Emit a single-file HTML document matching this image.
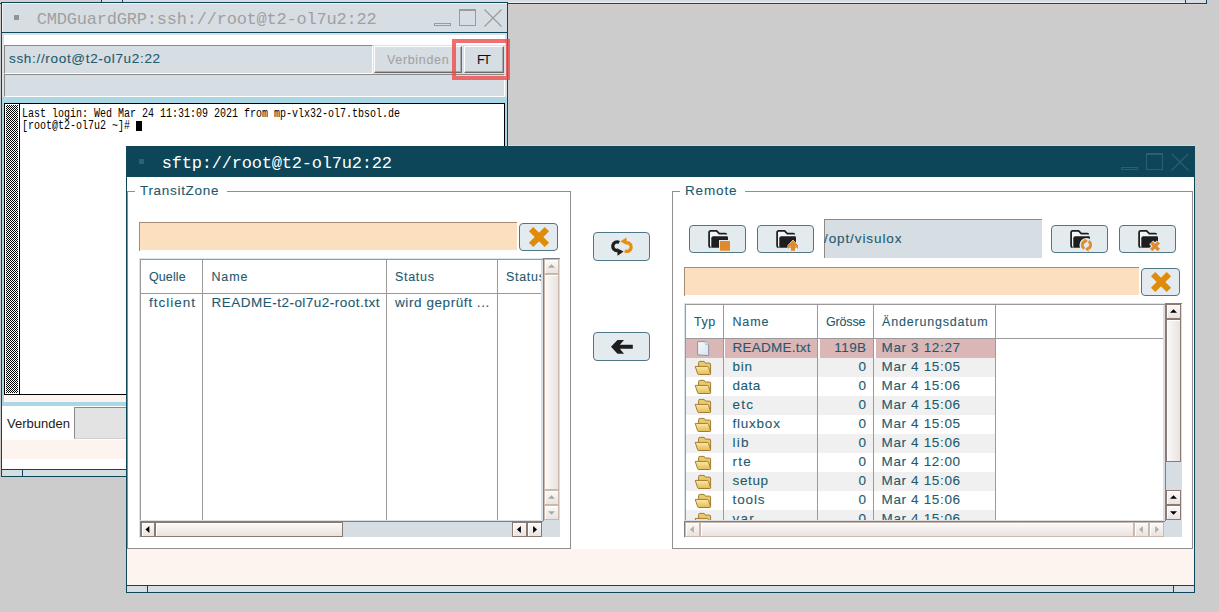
<!DOCTYPE html>
<html><head><meta charset="utf-8">
<style>
*{margin:0;padding:0;box-sizing:border-box}
html,body{width:1219px;height:612px;overflow:hidden;background:#cccccc;position:relative;font-family:"Liberation Sans",sans-serif}
.a{position:absolute}
.t{position:absolute;white-space:nowrap;line-height:1;-webkit-text-stroke:0.1px currentColor}
svg{position:absolute;overflow:visible}
</style></head><body>

<div class="a" style="left:0px;top:0px;width:1207px;height:4px;background:#d6dee4;border-bottom:1px solid #0c4658;border-right:1px solid #0c4658"></div>
<div class="a" style="left:0px;top:0px;width:101px;height:3px;background:#d4d0cf"></div>
<div class="a" style="left:101px;top:0px;width:1px;height:3px;background:#0c4658"></div>
<div class="a" style="left:122px;top:0px;width:1px;height:3px;background:#0c4658"></div>
<div class="a" style="left:1185px;top:0px;width:1px;height:3px;background:#0c4658"></div>
<div class="a" style="left:508px;top:2px;width:677px;height:1px;background:#eef2f4"></div>
<div class="a" style="left:508px;top:4px;width:698px;height:1px;background:#d9d2d0"></div>
<div class="a" style="left:1px;top:2px;width:507px;height:475px;background:#fff;border:1px solid #0c4658"></div>
<div class="a" style="left:2px;top:3px;width:505px;height:29px;background:#d6dee4;border-top:1px solid #eef2f4;border-left:1px solid #eef2f4"></div>
<div class="a" style="left:1px;top:32px;width:507px;height:1px;background:#0c4658"></div>
<div class="a" style="left:14px;top:15px;width:5px;height:5px;background:#939393"></div>
<div class="t" style="left:36.8px;top:10.97px;font-family:'Liberation Mono';font-size:17px;letter-spacing:-0.210px;color:#a0a0a0;-webkit-text-stroke:0;">CMDGuardGRP:ssh://root@t2-ol7u2:22</div>
<div class="a" style="left:434px;top:23px;width:17px;height:3px;border:1px solid #9a9a9a"></div>
<div class="a" style="left:459px;top:9px;width:17px;height:17px;border:1px solid #9a9a9a;border-top-width:2px"></div>
<svg style="left:484px;top:9px" width="18" height="18"><path d="M0.5 0.5L17.5 17.5M17.5 0.5L0.5 17.5" stroke="#9a9a9a" stroke-width="1.1"/></svg>
<div class="a" style="left:2px;top:33px;width:505px;height:64px;background:#d9e0e6"></div>
<div class="a" style="left:4px;top:35px;width:501px;height:10px;background:#fff"></div>
<div class="a" style="left:4px;top:45px;width:369px;height:29px;background:#d6dde3;border-top:1px solid #8a8a8a;border-left:1px solid #8a8a8a;border-right:1px solid #fff;border-bottom:1px solid #fff"></div>
<div class="t" style="left:9px;top:52.07px;font-family:'Liberation Sans';font-size:13.5px;letter-spacing:0.681px;color:#1e5a6e;">ssh://root@t2-ol7u2:22</div>
<div class="a" style="left:374px;top:46px;width:88px;height:27px;background:#d6dde3;border-top:1px solid #fff;border-left:1px solid #fff;border-right:1px solid #6a6a6a;border-bottom:1px solid #6a6a6a;box-shadow:inset -1px -1px 0 #a8acb0"></div>
<div class="t" style="left:387px;top:54.42px;font-family:'Liberation Sans';font-size:12.5px;letter-spacing:0.662px;color:#a3a3a3;">Verbinden</div>
<div class="a" style="left:464px;top:46px;width:40px;height:27px;background:#d6dde3;border-top:1px solid #fff;border-left:1px solid #fff;border-right:1px solid #6a6a6a;border-bottom:1px solid #6a6a6a;box-shadow:inset -1px -1px 0 #a8acb0"></div>
<div class="t" style="left:477px;top:54.42px;font-family:'Liberation Sans';font-size:12.5px;letter-spacing:-1.500px;color:#111111;">FT</div>
<div class="a" style="left:4px;top:74px;width:501px;height:23px;background:#d6dde3;border-top:1px solid #8a8a8a;border-left:1px solid #8a8a8a;border-right:1px solid #fff;border-bottom:1px solid #fff"></div>
<div class="a" style="left:2px;top:97px;width:505px;height:309px;background:#a9d7e6"></div>
<div class="a" style="left:4px;top:395px;width:501px;height:7px;background:#fdf3ef"></div>
<div class="a" style="left:4px;top:103px;width:501px;height:292px;background:#fff;border:1px solid #000"></div>
<div class="a" style="left:6px;top:105px;width:12px;height:288px;background:repeating-conic-gradient(#000 0 25%,#fff 0 50%) 0 0/2px 2px"></div>
<div class="a" style="left:19px;top:104px;width:1px;height:290px;background:#000"></div>
<div class="t " style="left:22px;top:107.7px;font-family:'Liberation Mono';font-size:10px;line-height:10px;color:#000;-webkit-text-stroke:0;transform:scaleY(1.35);transform-origin:0 0">Last login: Wed Mar 24 11:31:09 2021 from mp-vlx32-ol7.tbsol.de</div>
<div class="t " style="left:22px;top:119.8px;font-family:'Liberation Mono';font-size:10px;line-height:10px;color:#000;-webkit-text-stroke:0;transform:scaleY(1.35);transform-origin:0 0">[root@t2-ol7u2 ~]#</div>
<div class="a" style="left:136px;top:121px;width:6px;height:10px;background:#000"></div>
<div class="a" style="left:2px;top:406px;width:505px;height:63px;background:#fff"></div>
<div class="t" style="left:7px;top:417.00px;font-family:'Liberation Sans';font-size:13px;letter-spacing:0.000px;color:#1a1a1a;-webkit-text-stroke:0px currentColor;">Verbunden</div>
<div class="a" style="left:74px;top:407px;width:60px;height:32px;background:#e3e3e3;border-top:1px solid #8a8a8a;border-left:1px solid #8a8a8a;border-bottom:1px solid #cfcfcf"></div>
<div class="a" style="left:2px;top:440px;width:505px;height:19px;background:#fdf3ef"></div>
<div class="a" style="left:1px;top:469px;width:507px;height:1px;background:#0c4658"></div>
<div class="a" style="left:2px;top:470px;width:505px;height:6px;background:#d6dee4"></div>
<div class="a" style="left:22px;top:470px;width:1px;height:6px;background:#0c4658"></div>
<div class="a" style="left:508px;top:145px;width:687px;height:1px;background:#ddd6d4"></div>
<div class="a" style="left:126px;top:146px;width:1069px;height:447px;background:#fff;border:1px solid #0c4658"></div>
<div class="a" style="left:126px;top:146px;width:1069px;height:31px;background:#0c4658"></div>
<div class="a" style="left:139px;top:159px;width:5px;height:5px;background:#2b6179"></div>
<div class="t" style="left:161.8px;top:154.97px;font-family:'Liberation Mono';font-size:17px;letter-spacing:-0.200px;color:#ffffff;-webkit-text-stroke:0;">sftp://root@t2-ol7u2:22</div>
<div class="a" style="left:1121px;top:167px;width:17px;height:3px;border:1px solid #2d5e73"></div>
<div class="a" style="left:1146px;top:153px;width:17px;height:17px;border:1px solid #2d5e73;border-top-width:2px"></div>
<svg style="left:1171px;top:153px" width="18" height="18"><path d="M0.5 0.5L17.5 17.5M17.5 0.5L0.5 17.5" stroke="#2d5e73" stroke-width="1.1"/></svg>
<div class="a" style="left:127px;top:549px;width:1067px;height:36px;background:#fdf3ef"></div>
<div class="a" style="left:126px;top:585px;width:1069px;height:1px;background:#0c4658"></div>
<div class="a" style="left:127px;top:586px;width:1067px;height:6px;background:#d6dee4"></div>
<div class="a" style="left:147px;top:586px;width:1px;height:6px;background:#0c4658"></div>
<div class="a" style="left:1173px;top:586px;width:1px;height:6px;background:#0c4658"></div>
<div class="a" style="left:127px;top:191px;width:444px;height:358px;border:1px solid #8f8f8f"></div>
<div class="a" style="left:135px;top:188px;width:92px;height:8px;background:#fff"></div>
<div class="t" style="left:140px;top:183.57px;font-family:'Liberation Sans';font-size:13.5px;letter-spacing:0.690px;color:#1e5a6e;">TransitZone</div>
<div class="a" style="left:139px;top:222px;width:378px;height:28px;background:#fcdfbe;border-top:1px solid #a48c76"></div>
<div class="a" style="left:139px;top:222px;width:1px;height:29px;background:#a48c76"></div>
<div class="a" style="left:519px;top:223px;width:39px;height:28px;border:1px solid #4f7686;border-radius:4px;background:#e4ebef"></div>
<svg style="left:526.5px;top:225.0px" width="24" height="24"><path d="M4.1 4.1L19.9 19.9M19.9 4.1L4.1 19.9" stroke="#e08c0b" stroke-width="6.2"/></svg>
<div class="a" style="left:139px;top:258px;width:404px;height:1px;background:#d9e3e9"></div>
<div class="a" style="left:139px;top:258px;width:1px;height:280px;background:#d9e3e9"></div>
<div class="a" style="left:140px;top:259px;width:404px;height:263px;background:#fff;border-top:1px solid #9a9a9a;border-left:1px solid #9a9a9a"></div>
<div class="a" style="left:141px;top:293px;width:401px;height:1px;background:#9a9a9a"></div>
<div class="a" style="left:202px;top:260px;width:1px;height:261px;background:#9a9a9a"></div>
<div class="a" style="left:386px;top:260px;width:1px;height:261px;background:#9a9a9a"></div>
<div class="a" style="left:497px;top:260px;width:1px;height:261px;background:#9a9a9a"></div>
<div class="a" style="left:541px;top:260px;width:2px;height:261px;background:#d8e0e5"></div>
<div class="a" style="left:140px;top:520px;width:403px;height:1px;background:#d8e0e5"></div>
<div class="t" style="left:149px;top:271.42px;font-family:'Liberation Sans';font-size:12.5px;letter-spacing:0.100px;color:#1e5a6e;">Quelle</div>
<div class="t" style="left:211.5px;top:271.42px;font-family:'Liberation Sans';font-size:12.5px;letter-spacing:0.833px;color:#1e5a6e;">Name</div>
<div class="t" style="left:395px;top:271.42px;font-family:'Liberation Sans';font-size:12.5px;letter-spacing:0.700px;color:#1e5a6e;">Status</div>
<div class="t" style="left:506px;top:271.42px;font-family:'Liberation Sans';font-size:12.5px;letter-spacing:0.700px;color:#1e5a6e;">Status</div>
<div class="a" style="left:541px;top:260px;width:2px;height:34px;background:#fff"></div>
<div class="a" style="left:541px;top:260px;width:2px;height:261px;background:#d8e0e5"></div>
<div class="t" style="left:149px;top:295.57px;font-family:'Liberation Sans';font-size:13.5px;letter-spacing:0.986px;color:#1e5a6e;">ftclient</div>
<div class="t" style="left:211.5px;top:295.57px;font-family:'Liberation Sans';font-size:13.5px;letter-spacing:0.487px;color:#1e5a6e;">README-t2-ol7u2-root.txt</div>
<div class="t" style="left:395px;top:295.57px;font-family:'Liberation Sans';font-size:13.5px;letter-spacing:0.580px;color:#1e5a6e;">wird geprüft ...</div>
<div class="a" style="left:543px;top:258px;width:17px;height:263px;background:#d6dee4;border-top:1px solid #7d8185;border-left:1px solid #7d8185"></div>
<div class="a" style="left:544px;top:259px;width:15px;height:15px;border:1px solid #cbb8ad;background:linear-gradient(#fbf9f8,#e9e3e0);box-shadow:inset 1px 1px 0 #fff"></div>
<svg style="left:0;top:0" width="1" height="1"><path d="M548.0 267.8 L551.5 264.2 L555.0 267.8Z" fill="#a9a9a4"/></svg>
<div class="a" style="left:544px;top:274px;width:15px;height:216px;border:1px solid #cbb8ad;background:linear-gradient(90deg,#fbf9f8,#e9e3e0);box-shadow:inset 1px 1px 0 #fff"></div>
<div class="a" style="left:544px;top:490px;width:15px;height:15px;border:1px solid #cbb8ad;background:linear-gradient(#fbf9f8,#e9e3e0);box-shadow:inset 1px 1px 0 #fff"></div>
<svg style="left:0;top:0" width="1" height="1"><path d="M548.0 498.8 L551.5 495.2 L555.0 498.8Z" fill="#a9a9a4"/></svg>
<div class="a" style="left:544px;top:505px;width:15px;height:15px;border:1px solid #cbb8ad;background:linear-gradient(#fbf9f8,#e9e3e0);box-shadow:inset 1px 1px 0 #fff"></div>
<svg style="left:0;top:0" width="1" height="1"><path d="M548.0 511.2 L551.5 514.8 L555.0 511.2Z" fill="#a9a9a4"/></svg>
<div class="a" style="left:140px;top:521px;width:403px;height:16px;background:#d6dee4;border-top:1px solid #7d8185;border-left:1px solid #7d8185"></div>
<div class="a" style="left:155px;top:522px;width:188px;height:15px;border:1px solid #8a7a72;background:linear-gradient(#fbf9f8,#e9e3e0);box-shadow:inset 1px 1px 0 #fff"></div>
<div class="a" style="left:141px;top:522px;width:14px;height:15px;border:1px solid #8a7a72;background:linear-gradient(#fbf9f8,#e9e3e0);box-shadow:inset 1px 1px 0 #fff"></div>
<svg style="left:0;top:0" width="1" height="1"><path d="M149.4 526.1 L145.4 529.5 L149.4 532.9Z" fill="#000"/></svg>
<div class="a" style="left:512px;top:522px;width:15px;height:15px;border:1px solid #8a7a72;background:linear-gradient(#fbf9f8,#e9e3e0);box-shadow:inset 1px 1px 0 #fff"></div>
<svg style="left:0;top:0" width="1" height="1"><path d="M520.9 526.1 L516.9 529.5 L520.9 532.9Z" fill="#000"/></svg>
<div class="a" style="left:527px;top:522px;width:15px;height:15px;border:1px solid #8a7a72;background:linear-gradient(#fbf9f8,#e9e3e0);box-shadow:inset 1px 1px 0 #fff"></div>
<svg style="left:0;top:0" width="1" height="1"><path d="M533.1 526.1 L537.1 529.5 L533.1 532.9Z" fill="#000"/></svg>
<div class="a" style="left:543px;top:521px;width:17px;height:16px;background:#d6dee4"></div>
<div class="a" style="left:593px;top:232px;width:57px;height:29px;border:1px solid #4f7686;border-radius:4px;background:#e4ebef"></div>
<div class="a" style="left:593px;top:332px;width:57px;height:29px;border:1px solid #4f7686;border-radius:4px;background:#e4ebef"></div>
<svg style="left:606px;top:234px" width="32" height="26"><g id="blk"><path d="M13.2 8.45 A4.3 4.3 0 1 0 11.5 16.48" fill="none" stroke="#1e1e1e" stroke-width="3.3"/><path d="M11.0 14.2 L17.6 17.6 L11.6 21.8Z" fill="#1e1e1e"/></g><g transform="rotate(180 16 12.6)"><path d="M13.2 8.45 A4.3 4.3 0 1 0 11.5 16.48" fill="none" stroke="#e38f0c" stroke-width="3.3"/><path d="M11.0 14.2 L17.6 17.6 L11.6 21.8Z" fill="#e38f0c"/></g></svg>
<svg style="left:606px;top:336px" width="32" height="26"><path d="M5 10.8 L11.5 4.1 L18 4.1 L13.9 8.8 L26.8 8.8 L26.8 12.8 L13.9 12.8 L18 17.8 L11.5 17.8Z" fill="#1e1e1e"/></svg>
<div class="a" style="left:672px;top:191px;width:521px;height:358px;border:1px solid #8f8f8f"></div>
<div class="a" style="left:680px;top:188px;width:65px;height:8px;background:#fff"></div>
<div class="t" style="left:685px;top:183.57px;font-family:'Liberation Sans';font-size:13.5px;letter-spacing:0.860px;color:#1e5a6e;">Remote</div>
<div class="a" style="left:689px;top:225px;width:57px;height:28px;border:1px solid #4f7686;border-radius:4px;background:#e4ebef"></div>
<svg style="left:708px;top:229px" width="24" height="24"><path d="M18.3 5.6 Q18.3 4.7 17.4 4.7 H11.3 L8.6 1.9 H2.6 Q1.1 1.9 1.1 3.4 V16.8 Q1.1 18.4 2.6 18.4" fill="#f3f6f8" stroke="#1e1e1e" stroke-width="1.75"/><path d="M5.3 7.3 H18.8 Q20 7.3 20 8.5 V18.8 H3.3 V9.3 Q3.3 7.3 5.3 7.3Z" fill="#1e1e1e"/></svg>
<div class="a" style="left:757px;top:225px;width:57px;height:28px;border:1px solid #4f7686;border-radius:4px;background:#e4ebef"></div>
<svg style="left:776px;top:229px" width="24" height="24"><path d="M18.3 5.6 Q18.3 4.7 17.4 4.7 H11.3 L8.6 1.9 H2.6 Q1.1 1.9 1.1 3.4 V16.8 Q1.1 18.4 2.6 18.4" fill="#f3f6f8" stroke="#1e1e1e" stroke-width="1.75"/><path d="M5.3 7.3 H18.8 Q20 7.3 20 8.5 V18.8 H3.3 V9.3 Q3.3 7.3 5.3 7.3Z" fill="#1e1e1e"/></svg>
<div class="a" style="left:1051px;top:225px;width:57px;height:28px;border:1px solid #4f7686;border-radius:4px;background:#e4ebef"></div>
<svg style="left:1070px;top:229px" width="24" height="24"><path d="M18.3 5.6 Q18.3 4.7 17.4 4.7 H11.3 L8.6 1.9 H2.6 Q1.1 1.9 1.1 3.4 V16.8 Q1.1 18.4 2.6 18.4" fill="#f3f6f8" stroke="#1e1e1e" stroke-width="1.75"/><path d="M5.3 7.3 H18.8 Q20 7.3 20 8.5 V18.8 H3.3 V9.3 Q3.3 7.3 5.3 7.3Z" fill="#1e1e1e"/></svg>
<div class="a" style="left:1119px;top:225px;width:57px;height:28px;border:1px solid #4f7686;border-radius:4px;background:#e4ebef"></div>
<svg style="left:1138px;top:229px" width="24" height="24"><path d="M18.3 5.6 Q18.3 4.7 17.4 4.7 H11.3 L8.6 1.9 H2.6 Q1.1 1.9 1.1 3.4 V16.8 Q1.1 18.4 2.6 18.4" fill="#f3f6f8" stroke="#1e1e1e" stroke-width="1.75"/><path d="M5.3 7.3 H18.8 Q20 7.3 20 8.5 V18.8 H3.3 V9.3 Q3.3 7.3 5.3 7.3Z" fill="#1e1e1e"/></svg>
<svg style="left:708px;top:229px" width="24" height="24"><rect x="11" y="11" width="12" height="11.7" fill="#e4ebef"/><rect x="12" y="12" width="10" height="9.7" fill="#e08a2c"/></svg>
<svg style="left:776px;top:229px" width="24" height="24"><path d="M17 11 L22 16.5 L22 20 L19 17 L19 21.7 L15 21.7 L15 17 L12 20 L12 16.5Z" fill="#e08a2c" stroke="#e4ebef" stroke-width="1"/><path d="M17 11 L22 16.5 L22 20 L19 17 L19 21.7 L15 21.7 L15 17 L12 20 L12 16.5Z" fill="#e08a2c"/></svg>
<svg style="left:1070px;top:229px" width="24" height="24"><circle cx="16.45" cy="15.95" r="7" fill="#e4ebef"/><g><path d="M14.35 19.6 A4.2 4.2 0 0 1 14.35 12.3" fill="none" stroke="#e08a2c" stroke-width="2.8"/><path d="M14.3 9.2 L17.9 12.0 L14.1 15.0Z" fill="#e08a2c"/></g><g transform="rotate(180 16.45 15.95)"><path d="M14.35 19.6 A4.2 4.2 0 0 1 14.35 12.3" fill="none" stroke="#e08a2c" stroke-width="2.8"/><path d="M14.3 9.2 L17.9 12.0 L14.1 15.0Z" fill="#e08a2c"/></g></svg>
<svg style="left:1138px;top:229px" width="24" height="24"><path d="M13.2 13.4 L20.8 21 M20.8 13.4 L13.2 21" stroke="#e4ebef" stroke-width="5.5"/><path d="M13.2 13.4 L20.8 21 M20.8 13.4 L13.2 21" stroke="#e08a2c" stroke-width="3.3"/></svg>
<div class="a" style="left:824px;top:219px;width:218px;height:39px;background:#d6dde3;border-left:1px solid #8a8a8a;border-top:1px solid #8a8a8a"></div>
<div class="t" style="left:824px;top:231.57px;font-family:'Liberation Sans';font-size:13.5px;letter-spacing:0.900px;color:#1e5a6e;">/opt/visulox</div>
<div class="a" style="left:684px;top:267px;width:455px;height:28px;background:#fcdfbe;border-top:1px solid #a48c76"></div>
<div class="a" style="left:684px;top:267px;width:1px;height:29px;background:#a48c76"></div>
<div class="a" style="left:1141px;top:268px;width:39px;height:28px;border:1px solid #4f7686;border-radius:4px;background:#e4ebef"></div>
<svg style="left:1148.5px;top:270.0px" width="24" height="24"><path d="M4.1 4.1L19.9 19.9M19.9 4.1L4.1 19.9" stroke="#e08c0b" stroke-width="6.2"/></svg>
<div class="a" style="left:684px;top:303px;width:481px;height:1px;background:#d9e3e9"></div>
<div class="a" style="left:684px;top:303px;width:1px;height:235px;background:#d9e3e9"></div>
<div class="a" style="left:685px;top:304px;width:481px;height:217px;background:#fff;border-top:1px solid #9a9a9a;border-left:1px solid #9a9a9a"></div>
<div class="a" style="left:686px;top:338px;width:479px;height:1px;background:#9a9a9a"></div>
<div class="t" style="left:694px;top:315.92px;font-family:'Liberation Sans';font-size:12.5px;letter-spacing:0.550px;color:#1e5a6e;">Typ</div>
<div class="t" style="left:732.5px;top:315.92px;font-family:'Liberation Sans';font-size:12.5px;letter-spacing:0.833px;color:#1e5a6e;">Name</div>
<div class="t" style="left:826px;top:315.92px;font-family:'Liberation Sans';font-size:12.5px;letter-spacing:-0.160px;color:#1e5a6e;">Grösse</div>
<div class="t" style="left:882px;top:315.92px;font-family:'Liberation Sans';font-size:12.5px;letter-spacing:0.808px;color:#1e5a6e;">Änderungsdatum</div>
<div class="a" style="left:686px;top:339px;width:479px;height:181px;overflow:hidden">
<div class="a" style="left:0px;top:0px;width:37px;height:19px;background:#dab6b7"></div>
<div class="a" style="left:39px;top:0px;width:92px;height:19px;background:#dab6b7"></div>
<div class="a" style="left:134px;top:0px;width:53px;height:19px;background:#dab6b7"></div>
<div class="a" style="left:190px;top:0px;width:119px;height:19px;background:#dab6b7"></div>
<div class="t" style="left:46.5px;top:1.57px;font-family:'Liberation Sans';font-size:13.5px;letter-spacing:0.244px;color:#1e5a6e;">README.txt</div>
<div class="t" style="right:298.5px;top:1.57px;font-size:13.5px;letter-spacing:0.4px;color:#1e5a6e">119B</div>
<div class="t" style="left:195.5px;top:1.57px;font-family:'Liberation Sans';font-size:13.5px;letter-spacing:0.650px;color:#1e5a6e;">Mar 3 12:27</div>
<svg style="left:11px;top:1.5px" width="14" height="17"><defs><linearGradient id="pg" x1="0" y1="0" x2="1" y2="1"><stop offset="0" stop-color="#f6f9fc"/><stop offset="1" stop-color="#d9e4ee"/></linearGradient></defs><path d="M0.6 0.6 H8.6 L11.6 3.6 V14.6 L0.6 13.8Z" fill="url(#pg)" stroke="#8796a3" stroke-width="1"/><path d="M8.6 0.6 V3.6 H11.6" fill="#dfe8f0" stroke="#a9b6c0" stroke-width="0.8"/></svg>
<div class="a" style="left:0px;top:19px;width:309px;height:19px;background:#f0f0f0"></div>
<div class="t" style="left:46.5px;top:20.57px;font-family:'Liberation Sans';font-size:13.5px;letter-spacing:0.750px;color:#1e5a6e;">bin</div>
<div class="t" style="right:298.5px;top:20.57px;font-size:13.5px;letter-spacing:0.4px;color:#1e5a6e">0</div>
<div class="t" style="left:195.5px;top:20.57px;font-family:'Liberation Sans';font-size:13.5px;letter-spacing:0.650px;color:#1e5a6e;">Mar 4 15:05</div>
<svg style="left:8px;top:20.5px" width="18" height="16"><defs><linearGradient id="fg1" x1="0" y1="0" x2="0" y2="1"><stop offset="0" stop-color="#fbe9a6"/><stop offset="1" stop-color="#e2bb55"/></linearGradient></defs><path d="M4.6 13.5 V2.6 Q4.6 1.4 5.8 1.4 H10.2 L11.3 3.1 H15.6 Q16.6 3.1 16.6 4.1 V13.5Z" fill="#eacb6c" stroke="#a27c33" stroke-width="1"/><path d="M1.2 6.4 H13.4 Q14.2 6.4 14.5 7.2 L16.6 13.6 Q16.8 14.5 15.8 14.5 H4.6 Q3.9 14.5 3.7 13.8Z" fill="url(#fg1)" stroke="#a27c33" stroke-width="1"/></svg>
<div class="t" style="left:46.5px;top:39.57px;font-family:'Liberation Sans';font-size:13.5px;letter-spacing:0.500px;color:#1e5a6e;">data</div>
<div class="t" style="right:298.5px;top:39.57px;font-size:13.5px;letter-spacing:0.4px;color:#1e5a6e">0</div>
<div class="t" style="left:195.5px;top:39.57px;font-family:'Liberation Sans';font-size:13.5px;letter-spacing:0.650px;color:#1e5a6e;">Mar 4 15:06</div>
<svg style="left:8px;top:39.5px" width="18" height="16"><defs><linearGradient id="fg2" x1="0" y1="0" x2="0" y2="1"><stop offset="0" stop-color="#fbe9a6"/><stop offset="1" stop-color="#e2bb55"/></linearGradient></defs><path d="M4.6 13.5 V2.6 Q4.6 1.4 5.8 1.4 H10.2 L11.3 3.1 H15.6 Q16.6 3.1 16.6 4.1 V13.5Z" fill="#eacb6c" stroke="#a27c33" stroke-width="1"/><path d="M1.2 6.4 H13.4 Q14.2 6.4 14.5 7.2 L16.6 13.6 Q16.8 14.5 15.8 14.5 H4.6 Q3.9 14.5 3.7 13.8Z" fill="url(#fg2)" stroke="#a27c33" stroke-width="1"/></svg>
<div class="a" style="left:0px;top:57px;width:309px;height:19px;background:#f0f0f0"></div>
<div class="t" style="left:46.5px;top:58.57px;font-family:'Liberation Sans';font-size:13.5px;letter-spacing:1.250px;color:#1e5a6e;">etc</div>
<div class="t" style="right:298.5px;top:58.57px;font-size:13.5px;letter-spacing:0.4px;color:#1e5a6e">0</div>
<div class="t" style="left:195.5px;top:58.57px;font-family:'Liberation Sans';font-size:13.5px;letter-spacing:0.650px;color:#1e5a6e;">Mar 4 15:06</div>
<svg style="left:8px;top:58.5px" width="18" height="16"><defs><linearGradient id="fg3" x1="0" y1="0" x2="0" y2="1"><stop offset="0" stop-color="#fbe9a6"/><stop offset="1" stop-color="#e2bb55"/></linearGradient></defs><path d="M4.6 13.5 V2.6 Q4.6 1.4 5.8 1.4 H10.2 L11.3 3.1 H15.6 Q16.6 3.1 16.6 4.1 V13.5Z" fill="#eacb6c" stroke="#a27c33" stroke-width="1"/><path d="M1.2 6.4 H13.4 Q14.2 6.4 14.5 7.2 L16.6 13.6 Q16.8 14.5 15.8 14.5 H4.6 Q3.9 14.5 3.7 13.8Z" fill="url(#fg3)" stroke="#a27c33" stroke-width="1"/></svg>
<div class="t" style="left:46.5px;top:77.57px;font-family:'Liberation Sans';font-size:13.5px;letter-spacing:0.767px;color:#1e5a6e;">fluxbox</div>
<div class="t" style="right:298.5px;top:77.57px;font-size:13.5px;letter-spacing:0.4px;color:#1e5a6e">0</div>
<div class="t" style="left:195.5px;top:77.57px;font-family:'Liberation Sans';font-size:13.5px;letter-spacing:0.650px;color:#1e5a6e;">Mar 4 15:05</div>
<svg style="left:8px;top:77.5px" width="18" height="16"><defs><linearGradient id="fg4" x1="0" y1="0" x2="0" y2="1"><stop offset="0" stop-color="#fbe9a6"/><stop offset="1" stop-color="#e2bb55"/></linearGradient></defs><path d="M4.6 13.5 V2.6 Q4.6 1.4 5.8 1.4 H10.2 L11.3 3.1 H15.6 Q16.6 3.1 16.6 4.1 V13.5Z" fill="#eacb6c" stroke="#a27c33" stroke-width="1"/><path d="M1.2 6.4 H13.4 Q14.2 6.4 14.5 7.2 L16.6 13.6 Q16.8 14.5 15.8 14.5 H4.6 Q3.9 14.5 3.7 13.8Z" fill="url(#fg4)" stroke="#a27c33" stroke-width="1"/></svg>
<div class="a" style="left:0px;top:95px;width:309px;height:19px;background:#f0f0f0"></div>
<div class="t" style="left:46.5px;top:96.57px;font-family:'Liberation Sans';font-size:13.5px;letter-spacing:1.250px;color:#1e5a6e;">lib</div>
<div class="t" style="right:298.5px;top:96.57px;font-size:13.5px;letter-spacing:0.4px;color:#1e5a6e">0</div>
<div class="t" style="left:195.5px;top:96.57px;font-family:'Liberation Sans';font-size:13.5px;letter-spacing:0.650px;color:#1e5a6e;">Mar 4 15:06</div>
<svg style="left:8px;top:96.5px" width="18" height="16"><defs><linearGradient id="fg5" x1="0" y1="0" x2="0" y2="1"><stop offset="0" stop-color="#fbe9a6"/><stop offset="1" stop-color="#e2bb55"/></linearGradient></defs><path d="M4.6 13.5 V2.6 Q4.6 1.4 5.8 1.4 H10.2 L11.3 3.1 H15.6 Q16.6 3.1 16.6 4.1 V13.5Z" fill="#eacb6c" stroke="#a27c33" stroke-width="1"/><path d="M1.2 6.4 H13.4 Q14.2 6.4 14.5 7.2 L16.6 13.6 Q16.8 14.5 15.8 14.5 H4.6 Q3.9 14.5 3.7 13.8Z" fill="url(#fg5)" stroke="#a27c33" stroke-width="1"/></svg>
<div class="t" style="left:46.5px;top:115.57px;font-family:'Liberation Sans';font-size:13.5px;letter-spacing:1.250px;color:#1e5a6e;">rte</div>
<div class="t" style="right:298.5px;top:115.57px;font-size:13.5px;letter-spacing:0.4px;color:#1e5a6e">0</div>
<div class="t" style="left:195.5px;top:115.57px;font-family:'Liberation Sans';font-size:13.5px;letter-spacing:0.650px;color:#1e5a6e;">Mar 4 12:00</div>
<svg style="left:8px;top:115.5px" width="18" height="16"><defs><linearGradient id="fg6" x1="0" y1="0" x2="0" y2="1"><stop offset="0" stop-color="#fbe9a6"/><stop offset="1" stop-color="#e2bb55"/></linearGradient></defs><path d="M4.6 13.5 V2.6 Q4.6 1.4 5.8 1.4 H10.2 L11.3 3.1 H15.6 Q16.6 3.1 16.6 4.1 V13.5Z" fill="#eacb6c" stroke="#a27c33" stroke-width="1"/><path d="M1.2 6.4 H13.4 Q14.2 6.4 14.5 7.2 L16.6 13.6 Q16.8 14.5 15.8 14.5 H4.6 Q3.9 14.5 3.7 13.8Z" fill="url(#fg6)" stroke="#a27c33" stroke-width="1"/></svg>
<div class="a" style="left:0px;top:133px;width:309px;height:19px;background:#f0f0f0"></div>
<div class="t" style="left:46.5px;top:134.57px;font-family:'Liberation Sans';font-size:13.5px;letter-spacing:0.625px;color:#1e5a6e;">setup</div>
<div class="t" style="right:298.5px;top:134.57px;font-size:13.5px;letter-spacing:0.4px;color:#1e5a6e">0</div>
<div class="t" style="left:195.5px;top:134.57px;font-family:'Liberation Sans';font-size:13.5px;letter-spacing:0.650px;color:#1e5a6e;">Mar 4 15:06</div>
<svg style="left:8px;top:134.5px" width="18" height="16"><defs><linearGradient id="fg7" x1="0" y1="0" x2="0" y2="1"><stop offset="0" stop-color="#fbe9a6"/><stop offset="1" stop-color="#e2bb55"/></linearGradient></defs><path d="M4.6 13.5 V2.6 Q4.6 1.4 5.8 1.4 H10.2 L11.3 3.1 H15.6 Q16.6 3.1 16.6 4.1 V13.5Z" fill="#eacb6c" stroke="#a27c33" stroke-width="1"/><path d="M1.2 6.4 H13.4 Q14.2 6.4 14.5 7.2 L16.6 13.6 Q16.8 14.5 15.8 14.5 H4.6 Q3.9 14.5 3.7 13.8Z" fill="url(#fg7)" stroke="#a27c33" stroke-width="1"/></svg>
<div class="t" style="left:46.5px;top:153.57px;font-family:'Liberation Sans';font-size:13.5px;letter-spacing:0.875px;color:#1e5a6e;">tools</div>
<div class="t" style="right:298.5px;top:153.57px;font-size:13.5px;letter-spacing:0.4px;color:#1e5a6e">0</div>
<div class="t" style="left:195.5px;top:153.57px;font-family:'Liberation Sans';font-size:13.5px;letter-spacing:0.650px;color:#1e5a6e;">Mar 4 15:06</div>
<svg style="left:8px;top:153.5px" width="18" height="16"><defs><linearGradient id="fg8" x1="0" y1="0" x2="0" y2="1"><stop offset="0" stop-color="#fbe9a6"/><stop offset="1" stop-color="#e2bb55"/></linearGradient></defs><path d="M4.6 13.5 V2.6 Q4.6 1.4 5.8 1.4 H10.2 L11.3 3.1 H15.6 Q16.6 3.1 16.6 4.1 V13.5Z" fill="#eacb6c" stroke="#a27c33" stroke-width="1"/><path d="M1.2 6.4 H13.4 Q14.2 6.4 14.5 7.2 L16.6 13.6 Q16.8 14.5 15.8 14.5 H4.6 Q3.9 14.5 3.7 13.8Z" fill="url(#fg8)" stroke="#a27c33" stroke-width="1"/></svg>
<div class="a" style="left:0px;top:171px;width:309px;height:19px;background:#f0f0f0"></div>
<div class="t" style="left:46.5px;top:172.57px;font-family:'Liberation Sans';font-size:13.5px;letter-spacing:1.250px;color:#1e5a6e;">var</div>
<div class="t" style="right:298.5px;top:172.57px;font-size:13.5px;letter-spacing:0.4px;color:#1e5a6e">0</div>
<div class="t" style="left:195.5px;top:172.57px;font-family:'Liberation Sans';font-size:13.5px;letter-spacing:0.650px;color:#1e5a6e;">Mar 4 15:06</div>
<svg style="left:8px;top:172.5px" width="18" height="16"><defs><linearGradient id="fg9" x1="0" y1="0" x2="0" y2="1"><stop offset="0" stop-color="#fbe9a6"/><stop offset="1" stop-color="#e2bb55"/></linearGradient></defs><path d="M4.6 13.5 V2.6 Q4.6 1.4 5.8 1.4 H10.2 L11.3 3.1 H15.6 Q16.6 3.1 16.6 4.1 V13.5Z" fill="#eacb6c" stroke="#a27c33" stroke-width="1"/><path d="M1.2 6.4 H13.4 Q14.2 6.4 14.5 7.2 L16.6 13.6 Q16.8 14.5 15.8 14.5 H4.6 Q3.9 14.5 3.7 13.8Z" fill="url(#fg9)" stroke="#a27c33" stroke-width="1"/></svg>
</div>
<div class="a" style="left:723px;top:305px;width:1px;height:215px;background:#9a9a9a"></div>
<div class="a" style="left:817px;top:305px;width:1px;height:215px;background:#9a9a9a"></div>
<div class="a" style="left:873px;top:305px;width:1px;height:215px;background:#9a9a9a"></div>
<div class="a" style="left:995px;top:305px;width:1px;height:215px;background:#9a9a9a"></div>
<div class="a" style="left:1163px;top:305px;width:2px;height:215px;background:#d8e0e5"></div>
<div class="a" style="left:685px;top:520px;width:480px;height:1px;background:#d8e0e5"></div>
<div class="a" style="left:1165px;top:303px;width:17px;height:218px;background:#d6dee4;border-top:1px solid #7d8185;border-left:1px solid #7d8185"></div>
<div class="a" style="left:1166px;top:304px;width:15px;height:15px;border:1px solid #8a7a72;background:linear-gradient(#fbf9f8,#e9e3e0);box-shadow:inset 1px 1px 0 #fff"></div>
<svg style="left:0;top:0" width="1" height="1"><path d="M1170.0 312.8 L1173.5 309.2 L1177.0 312.8Z" fill="#000"/></svg>
<div class="a" style="left:1166px;top:319px;width:15px;height:143px;border:1px solid #8a7a72;background:linear-gradient(90deg,#fbf9f8,#e9e3e0);box-shadow:inset 1px 1px 0 #fff"></div>
<div class="a" style="left:1166px;top:490px;width:15px;height:15px;border:1px solid #8a7a72;background:linear-gradient(#fbf9f8,#e9e3e0);box-shadow:inset 1px 1px 0 #fff"></div>
<svg style="left:0;top:0" width="1" height="1"><path d="M1170.0 498.8 L1173.5 495.2 L1177.0 498.8Z" fill="#000"/></svg>
<div class="a" style="left:1166px;top:505px;width:15px;height:15px;border:1px solid #8a7a72;background:linear-gradient(#fbf9f8,#e9e3e0);box-shadow:inset 1px 1px 0 #fff"></div>
<svg style="left:0;top:0" width="1" height="1"><path d="M1170.0 511.2 L1173.5 514.8 L1177.0 511.2Z" fill="#000"/></svg>
<div class="a" style="left:684px;top:521px;width:481px;height:16px;background:#d6dee4;border-top:1px solid #7d8185;border-left:1px solid #7d8185"></div>
<div class="a" style="left:700px;top:522px;width:434px;height:15px;border:1px solid #cbb8ad;background:linear-gradient(#fbf9f8,#e9e3e0);box-shadow:inset 1px 1px 0 #fff"></div>
<div class="a" style="left:685px;top:522px;width:15px;height:15px;border:1px solid #cbb8ad;background:linear-gradient(#fbf9f8,#e9e3e0);box-shadow:inset 1px 1px 0 #fff"></div>
<svg style="left:0;top:0" width="1" height="1"><path d="M693.9 526.1 L689.9 529.5 L693.9 532.9Z" fill="#b0b0ac"/></svg>
<div class="a" style="left:1134px;top:522px;width:15px;height:15px;border:1px solid #cbb8ad;background:linear-gradient(#fbf9f8,#e9e3e0);box-shadow:inset 1px 1px 0 #fff"></div>
<svg style="left:0;top:0" width="1" height="1"><path d="M1142.9 526.1 L1138.9 529.5 L1142.9 532.9Z" fill="#b0b0ac"/></svg>
<div class="a" style="left:1149px;top:522px;width:15px;height:15px;border:1px solid #cbb8ad;background:linear-gradient(#fbf9f8,#e9e3e0);box-shadow:inset 1px 1px 0 #fff"></div>
<svg style="left:0;top:0" width="1" height="1"><path d="M1155.1 526.1 L1159.1 529.5 L1155.1 532.9Z" fill="#b0b0ac"/></svg>
<div class="a" style="left:1165px;top:521px;width:17px;height:16px;background:#d6dee4"></div>
<div class="a" style="left:452px;top:39px;width:58px;height:41px;border:4px solid rgba(238,70,70,0.78)"></div>
</body></html>
